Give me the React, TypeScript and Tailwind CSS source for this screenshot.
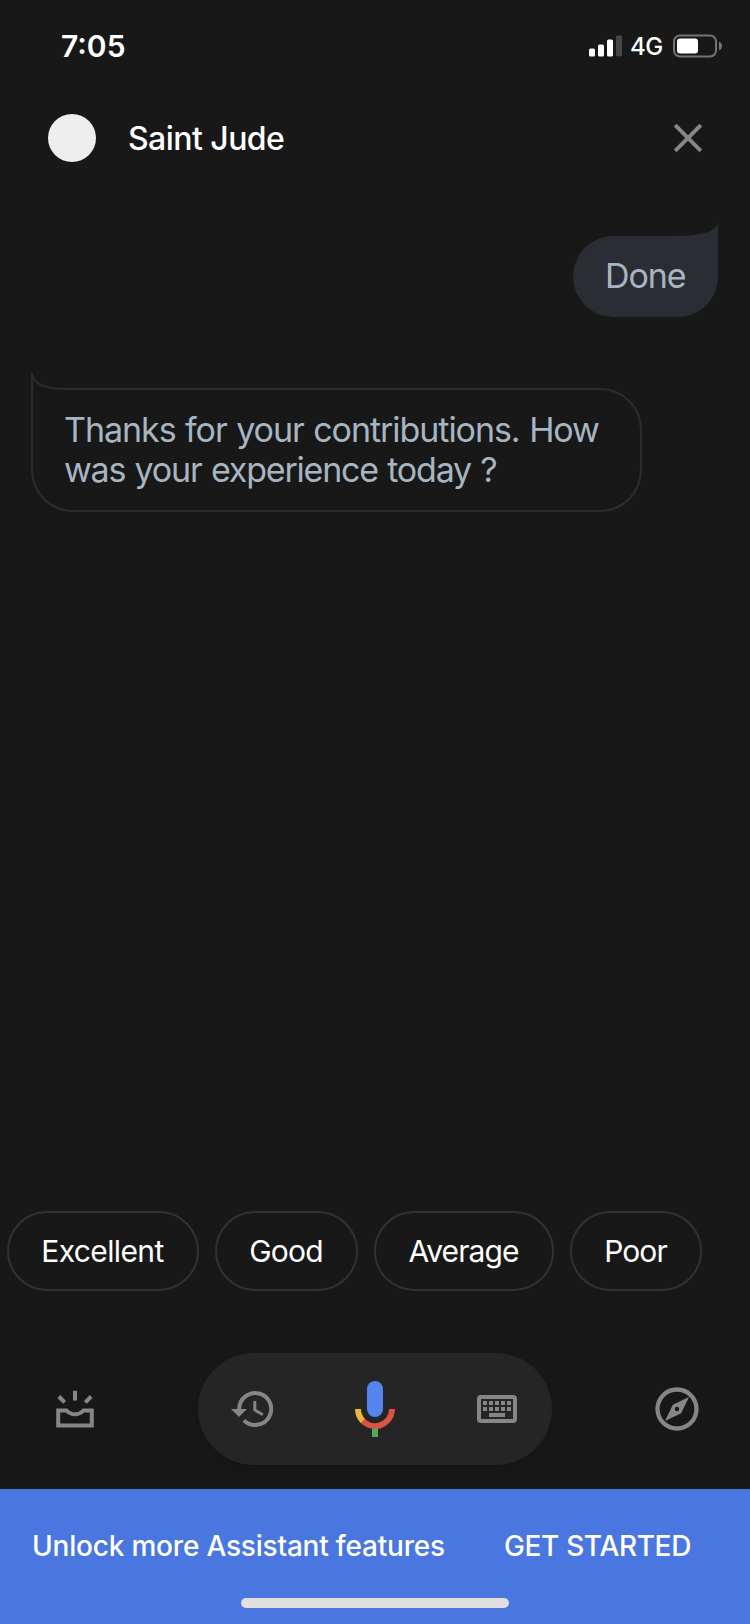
const replies = [
  { label: "Excellent", box: "w-[192px]", text: "tracking-[-0.63px]" },
  { label: "Good", box: "w-[143px]", text: "tracking-[-0.75px]" },
  { label: "Average", box: "w-[180px]", text: "tracking-[-0.9px]" },
  { label: "Poor", box: "w-[132px]", text: "tracking-[-0.9px]" },
];

function StatusBar() {
  return (
    <header className="flex h-[91px] items-center justify-between pr-[27px] pl-[61px]">
      <span className="text-[30px] leading-[36px] font-semibold text-white">7:05</span>
      <div className="flex items-center">
        <svg className="h-[22px] w-[34px]" viewBox="0 0 34 22" fill="#fff">
          <rect x="0" y="13.5" width="6" height="8" rx="1.5" />
          <rect x="9" y="9.5" width="6" height="12" rx="1.5" />
          <rect x="18" y="4.5" width="6" height="17" rx="1.5" />
          <rect x="27" y="0.5" width="6" height="21" rx="1.5" fill="#464646" />
        </svg>
        <span className="ml-[7px] w-[42px] pt-[2px] text-[24px] leading-[28px] font-medium tracking-[-0.4px] text-white">
          4G
        </span>
        <svg className="h-[24px] w-[51px]" viewBox="0 0 51 24">
          <rect x="2" y="1.5" width="42" height="21" rx="6" fill="none" stroke="#747474" strokeWidth="2" />
          <rect x="5" y="4.5" width="21" height="15" rx="3" fill="#fff" />
          <path d="M47 7.500c2 .8 3 2.500 3 4.500s-1 3.700-3 4.500z" fill="#747474" />
        </svg>
      </div>
    </header>
  );
}

function Compass() {
  return (
    <svg className="h-[48px] w-[48px]" viewBox="0 0 48 48">
      <circle cx="24" cy="24" r="19.500" fill="none" stroke="#868686" strokeWidth="4.300" />
      <path
        fillRule="evenodd"
        fill="#868686"
        d="M36 12 28.200 28.200 12 36 19.800 19.800zM24 21.800a2.200 2.200 0 1 0 0 4.400a2.200 2.200 0 1 0 0-4.400z"
      />
    </svg>
  );
}

function Inbox() {
  return (
    <svg className="h-[40px] w-[40px]" viewBox="0 0 40 40" fill="none" stroke="#868686" strokeWidth="4">
      <path d="M3.200 21.500H11.500C14 24.200 16.500 25.300 20 25.300s6-1.100 8.500-3.800H36.800V36.500H3.200z" />
      <path d="M20 1.800v9.700M3.800 7.500l5.900 5.900M36.200 7.500l-5.900 5.900" />
    </svg>
  );
}

function History() {
  return (
    <svg className="h-[40px] w-[43px]" viewBox="0 0 43 40" fill="none" stroke="#868686" strokeWidth="4">
      <path d="M9.200 20a16 16 0 1 1 4.700 11.300" />
      <path d="M1 20h16l-8 8z" fill="#868686" stroke="none" />
      <path d="M24.800 12v9l8 4.700" strokeWidth="3" />
    </svg>
  );
}

function Mic() {
  return (
    <svg className="h-[58px] w-[42px]" viewBox="0 0 42 58" fill="none">
      <rect x="13" y="1" width="16" height="36" rx="8" fill="#5484ed" />
      <path d="M4 29a17 17 0 0 0 5 12" stroke="#edb53c" strokeWidth="6" />
      <path d="M9 41a17 17 0 0 0 29-12" stroke="#dc5242" strokeWidth="6" />
      <path d="M21 48.500V57" stroke="#58a65c" strokeWidth="6" />
    </svg>
  );
}

function Keyboard() {
  const columns = [6, 12, 18, 24, 30];
  return (
    <svg className="h-[28px] w-[40px]" viewBox="0 0 40 28" fill="#868686">
      <rect x="2" y="2" width="36" height="24" rx="2" fill="none" stroke="#868686" strokeWidth="4" />
      {columns.map((x) => (
        <g key={x}>
          <rect x={x} y="6" width="4" height="4" />
          <rect x={x} y="12" width="4" height="4" />
        </g>
      ))}
      <rect x="12" y="18" width="16" height="4" />
    </svg>
  );
}

export default function App() {
  return (
    <div className="flex h-[1624px] w-[750px] flex-col overflow-hidden bg-[#181818] font-['Inter',sans-serif]">
      <StatusBar />
      <div className="flex h-[94px] items-center pr-[46px] pl-[48px]">
        <div className="h-[48px] w-[48px] rounded-full bg-[#eee]" />
        <h1 className="ml-[32px] flex-1 pt-[1px] text-[32px] leading-[40px] font-medium tracking-[-0.55px] text-white">
          Saint Jude
        </h1>
        <svg className="h-[32px] w-[32px]" viewBox="0 0 32 32" stroke="#868686" strokeWidth="4">
          <path d="M3.200 3.200 28.800 28.800M28.800 3.200 3.200 28.800" />
        </svg>
      </div>
      <main className="flex flex-1 flex-col">
        <div className="mt-[37px] mr-[32px] grid h-[95px] w-[145px] self-end">
          <svg className="col-start-1 row-start-1" width="145" height="95" viewBox="0 0 145 95" fill="#2b2d35">
            <path d="M40 14H104C128 13.500 144 10 145 0V55a40 40 0 0 1-40 40H40.500a40.500 40.500 0 0 1 0-81z" />
          </svg>
          <p className="col-start-1 row-start-1 pt-[34px] pl-[32px] text-[34px] leading-[40px] tracking-[-1.1px] text-[#a7b5c1]">
            Done
          </p>
        </div>
        <div className="mt-[55px] ml-[30px] grid h-[141px] w-[614px]">
          <svg
            className="col-start-1 row-start-1"
            width="614"
            height="141"
            viewBox="0 0 614 141"
            fill="none"
            stroke="#2b2d33"
            strokeWidth="2"
          >
            <path d="M2 1V98a41 41 0 0 0 41 41H570a41 41 0 0 0 41-41V58a41 41 0 0 0-41-41H36C16 17 2 12 2 1z" />
          </svg>
          <p className="col-start-1 row-start-1 pt-[38px] pl-[34px] text-[34px] leading-[40px] tracking-[-1.05px] whitespace-nowrap text-[#a7b5c1] [word-spacing:1px]">
            Thanks for your contributions. How
            <br />
            <span className="tracking-[-1.2px]">was your experience today ?</span>
          </p>
        </div>
      </main>
      <div className="flex h-[80px] gap-[16px] pl-[7px]">
        {replies.map((reply) => (
          <button
            key={reply.label}
            className={`flex h-[80px] items-center justify-center rounded-full border-2 border-[#2f3238] pr-[1px] text-[30px] leading-[36px] text-white ${reply.box}`}
          >
            <span className={reply.text}>{reply.label}</span>
          </button>
        ))}
      </div>
      <nav className="mt-[62px] mb-[24px] flex h-[112px] items-center justify-between pr-[49px] pl-[55px]">
        <Inbox />
        <div className="ml-[2px] flex h-[112px] w-[354px] items-center justify-between rounded-full bg-[#252525] pr-[35px] pl-[32px] shadow-[0_4px_16px_rgba(0,0,0,0.15)]">
          <History />
          <Mic />
          <Keyboard />
        </div>
        <Compass />
      </nav>
      <footer className="flex h-[135px] flex-col items-center bg-[#4a77df]">
        <div className="flex h-[109px] w-full items-center justify-between pt-[4px] pr-[59px] pl-[32px] text-[28px] leading-[36px] font-medium text-white">
          <span className="tracking-[-0.2px]">Unlock more Assistant features</span>
          <span className="tracking-[-0.35px]">GET STARTED</span>
        </div>
        <div className="h-[10px] w-[268px] rounded-full bg-[#e0e0e0]" />
      </footer>
    </div>
  );
}
